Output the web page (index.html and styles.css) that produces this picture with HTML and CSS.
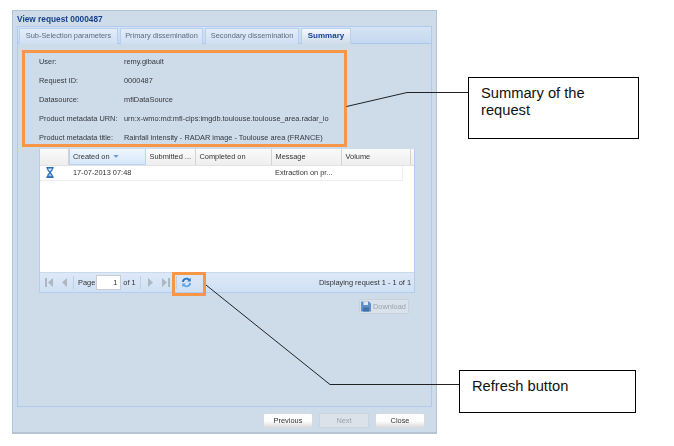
FILE: index.html
```html
<!DOCTYPE html>
<html lang="en">
<head>
<meta charset="utf-8">
<title>View request 0000487</title>
<link rel="stylesheet" href="styles.css">
</head>
<body>
<div class="window">
  <div class="title">View request 0000487</div>
  <div class="tabs">
    <div class="tab tab-sub">Sub-Selection parameters</div>
    <div class="tab tab-pri">Primary dissemination</div>
    <div class="tab tab-sec">Secondary dissemination</div>
    <div class="tab tab-sum active">Summary</div>
  </div>
  <div class="panel">
    <div class="summary">
      <div class="field"><span class="label">User:</span><span>remy.gibault</span></div>
      <div class="field"><span class="label">Request ID:</span><span>0000487</span></div>
      <div class="field"><span class="label">Datasource:</span><span>mfiDataSource</span></div>
      <div class="field"><span class="label">Product metadata URN:</span><span>urn:x-wmo:md:mfi-cips:imgdb.toulouse.toulouse_area.radar_io</span></div>
      <div class="field"><span class="label">Product metadata title:</span><span>Rainfall intensity - RADAR image - Toulouse area (FRANCE)</span></div>
    </div>
    <div class="grid">
      <div class="grid-head">
        <div class="th c0"></div>
        <div class="th c1 sorted">Created on <svg class="sort" width="6" height="3" viewBox="0 0 7 4"><path d="M0 0h7L3.500 4z"/></svg></div>
        <div class="th c2">Submitted ...</div>
        <div class="th c3">Completed on</div>
        <div class="th c4">Message</div>
        <div class="th c5">Volume</div>
      </div>
      <div class="grid-body">
        <div class="grid-row">
          <div class="td c0">
            <svg width="8" height="11" viewBox="0 0 10 15"><path d="M0 0h10v2H9c0 3-2 4-3 5.500 1 1.500 3 2.500 3 5.500h1v2H0v-2h1c0-3 2-4 3-5.500C3 6 1 5 1 2H0z" fill="#2b6cb8"/><path d="M2.500 2h5c0 1.500-1.500 3-2.500 4C4 5 2.500 3.500 2.500 2z" fill="#dfeafa"/><path d="M5 9c-1 .8-2 2-2.200 3.500h4.400C7 11 6 9.800 5 9z" fill="#9cc2ee"/></svg>
          </div>
          <div class="td c1">17-07-2013 07:48</div>
          <div class="td c2"></div>
          <div class="td c3"></div>
          <div class="td c4">Extraction on pr...</div>
        </div>
      </div>
      <div class="pager">
        <svg class="pg-ico" width="8" height="9" viewBox="0 0 8 9"><path d="M0 0h2v9H0zM8 0v9L3 4.500z" fill="#aeb6bf"/></svg>
        <svg class="pg-ico" width="6" height="9" viewBox="0 0 6 9"><path d="M6 0v9L1 4.500z" fill="#aeb6bf"/></svg>
        <span class="sep"></span>
        <span class="pg-text">Page</span>
        <span class="pg-input">1</span>
        <span class="pg-text">of 1</span>
        <span class="sep sep-mid"></span>
        <svg class="pg-ico" width="6" height="9" viewBox="0 0 6 9"><path d="M0 0v9l5-4.500z" fill="#aeb6bf"/></svg>
        <svg class="pg-ico" width="8" height="9" viewBox="0 0 8 9"><path d="M8 0H6v9h2zM0 0v9l5-4.500z" fill="#aeb6bf"/></svg>
        <span class="sep"></span>
        <span class="refresh">
          <svg width="11" height="11" viewBox="0 0 13 13"><path d="M1 6C1.500 2.500 4 1 6.500 1c1.500 0 2.700.5 3.500 1.300L11.500 1v4.200H7.300l1.500-1.500C8.200 3.200 7.400 3 6.500 3 5 3 3.800 4 3.400 6z" fill="#2a78c8"/><path d="M12 7c-.5 3.500-3 5-5.500 5-1.500 0-2.700-.5-3.500-1.300L1.500 12V7.800h4.200L4.200 9.300c.6.500 1.400.7 2.300.7 1.500 0 2.700-1 3.100-3z" fill="#57a5e8"/></svg>
        </span>
        <span class="sep-end"></span>
        <span class="pg-status">Displaying request 1 - 1 of 1</span>
      </div>
    </div>
    <div class="download-row">
      <div class="btn download">
        <svg width="10" height="11" viewBox="0 0 10 10"><path d="M0 0h8l2 2v8H0z" fill="#5f8fc4"/><path d="M2.500 0h4.500v3.500H2.500z" fill="#dfe8f2"/><path d="M2 6h6v4H2z" fill="#3f70a8"/></svg>
        Download
      </div>
    </div>
  </div>
  <div class="footer">
    <div class="btn">Previous</div>
    <div class="btn disabled">Next</div>
    <div class="btn">Close</div>
  </div>
</div>

<svg class="connectors" width="674" height="446" viewBox="0 0 674 446">
  <path d="M346.500 106.500L407 92.500H468M206 285L330 384.500H459"/>
</svg>
<div class="note note-summary">Summary of the request</div>
<div class="note note-refresh">Refresh button</div>
</body>
</html>
```
FILE: styles.css
```css
* { box-sizing: border-box; }
html, body { margin: 0; padding: 0; background: #fff; }
body {
  width: 674px;
  height: 446px;
  overflow: hidden;
  position: relative;
  font-family: "Liberation Sans", Arial, sans-serif;
}
.window {
  width: 425px;
  height: 424px;
  margin: 10px 0 0 12px;
  padding: 0 4px 0 4px;
  background: #cedbe9;
  border: 1px solid #b3c3d6;
  border-bottom: 2px solid #b6c3d2;
  display: flex;
  flex-direction: column;
  filter: blur(0.35px);
  font-size: 7.400px;
  color: #333;
}
.title {
  height: 15px;
  padding: 3px 0 0 0;
  font-size: 8.300px;
  line-height: 11px;
  font-weight: bold;
  color: #15428b;
}
.tabs {
  height: 18px;
  display: flex;
  gap: 2px;
  padding: 1px 0 0 1px;
  background: linear-gradient(#d5e3f4, #c6d9f1);
  border: 1px solid #b0cbee;
  border-bottom: 1px solid #a9c6ef;
}
.tab {
  height: 16px;
  line-height: 14px;
  text-align: center;
  white-space: nowrap;
  color: #5b6b80;
  background: linear-gradient(#e3ecf8, #cfdff3);
  border: 1px solid #b8d0ef;
  border-bottom: 0;
}
.tab-sub { width: 99px; }
.tab-pri { width: 83px; }
.tab-sec { width: 94px; }
.tab-sum { width: 50px; }
.tab.active {
  font-size: 8px;
  font-weight: bold;
  color: #15428b;
  background: linear-gradient(#f4f8fe, #cedbe9);
}
.panel {
  height: 363px;
  border: 1px solid #aecbef;
  border-top: 0;
  padding: 6px 0 0 4px;
  display: flex;
  flex-direction: column;
}
.summary {
  width: 325px;
  height: 97px;
  border: 3px solid #f79646;
  padding: 1px 0 0 14px;
  flex: none;
}
.field {
  height: 19px;
  line-height: 16px;
  display: flex;
  white-space: nowrap;
  color: #33373d;
}
.label { width: 85px; flex: none; }
.grid {
  width: 376px;
  height: 144px;
  margin: 2px 0 0 17px;
  display: flex;
  flex-direction: column;
  border: 1px solid #b3cdee;
  border-top: 0;
  background: #fff;
  flex: none;
}
.grid-head {
  height: 17px;
  display: flex;
  background: linear-gradient(#fafafa, #eeeeee);
  border-bottom: 1px solid #e2e2e2;
  flex: none;
}
.th {
  height: 16px;
  line-height: 16px;
  padding-left: 3.500px;
  border-right: 1px solid #d3d3d3;
  white-space: nowrap;
  overflow: hidden;
}
.th.sorted {
  padding-left: 3px;
  background: linear-gradient(#eef5fe, #d7e8fb);
  border: 1px solid #b8d2f2;
  border-top: 0;
  line-height: 15px;
}
.sort { fill: #6b9bd6; vertical-align: 1px; margin-left: 1px; }
.c0 { width: 29px; flex: none; }
.c1 { width: 77px; flex: none; }
.c2 { width: 50px; flex: none; }
.c3 { width: 76px; flex: none; }
.c4 { width: 70px; flex: none; }
.c5 { width: 69px; flex: none; }
.grid-body { flex: 1; }
.grid-row {
  width: 363px;
  height: 15px;
  display: flex;
  border-bottom: 1px solid #ededed;
  border-right: 1px solid #f0f0f0;
}
.td {
  line-height: 14px;
  padding-left: 4px;
  white-space: nowrap;
}
.td.c4 { padding-left: 3px; }
.td.c0 { padding: 1px 0 0 6px; }
.td.c0 svg { display: block; }
.pager {
  height: 20px;
  position: relative;
  flex: none;
  display: flex;
  align-items: center;
  padding: 0 3px 0 5px;
  background: linear-gradient(#dee9f7, #cfe0f5);
  border-top: 1px solid #c9d9ec;
}
.pg-ico { flex: none; margin-right: 8px; }
.sep {
  width: 1px;
  height: 13px;
  background: #bfd0e6;
  margin: 0 4px 0 -2px;
  flex: none;
}
.sep-mid { margin: 0 7px 0 3px; }
.sep-end {
  width: 1px;
  height: 2px;
  margin-left: 11px;
  background: #8fa5bf;
  flex: none;
}
.pg-text { color: #333; margin-right: 1px; }
.pg-input {
  width: 25px;
  height: 15px;
  margin-right: 2px;
  line-height: 13px;
  padding-right: 3px;
  text-align: right;
  background: #fff;
  border: 1px solid #c8cdd4;
}
.refresh {
  flex: none;
  position: relative;
  width: 11px;
  height: 11px;
}
.refresh svg { display: block; }
.refresh::after {
  content: "";
  position: absolute;
  left: -9px;
  top: -5px;
  box-sizing: border-box;
  width: 34px;
  height: 24px;
  border: 3px solid #f79646;
}
.pg-status { margin-left: auto; color: #333; }
.download-row {
  display: flex;
  justify-content: flex-end;
  padding: 6px 6px 0 0;
  width: 393px;
}
.btn {
  width: 50px;
  height: 15px;
  line-height: 14px;
  text-align: center;
  color: #333;
  background: linear-gradient(#fdfdfd 0 55%, #dcdcdc);
  border: 1px solid #d6d9dd;
  border-radius: 2px;
}
.btn.disabled { color: #9aa2ac; background: #dbe2ea; border-color: #ccd4dd; }
.btn.download {
  display: flex;
  align-items: center;
  gap: 2px;
  padding-left: 1px;
  color: #9aa2ac;
  background: #d9e1eb;
  border-color: #c8d1dc;
}
.footer {
  display: flex;
  justify-content: flex-end;
  gap: 6px;
  padding: 6px 7px 0 0;
}
.connectors {
  position: absolute;
  left: 0;
  top: 0;
  pointer-events: none;
}
.connectors path { fill: none; stroke: #222; stroke-width: 1; }
.note {
  position: absolute;
  background: #fff;
  border: 1px solid #000;
  color: #111;
  font-size: 14.700px;
  line-height: 17px;
}
.note-summary {
  left: 468px;
  top: 77px;
  width: 171px;
  height: 62px;
  padding: 7px 12px;
}
.note-refresh {
  left: 459px;
  top: 370px;
  width: 177px;
  height: 43px;
  padding: 7px 12px;
}
```
